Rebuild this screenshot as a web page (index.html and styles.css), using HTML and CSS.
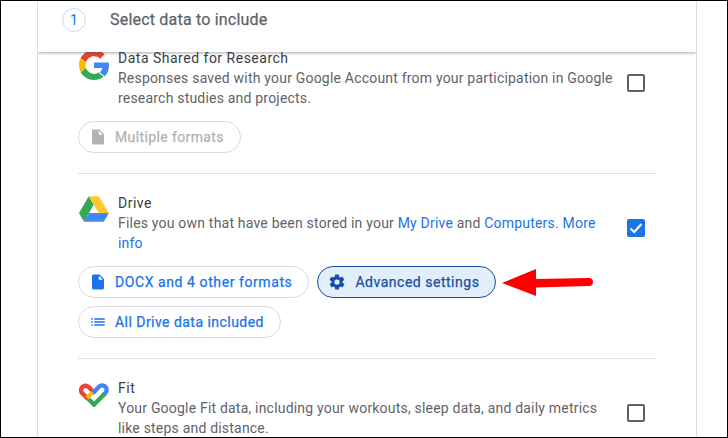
FILE: index.html
```html
<!DOCTYPE html>
<html lang="en">
<head>
<meta charset="utf-8">
<title>Select data to include</title>
<link rel="stylesheet" href="styles.css">
</head>
<body>
<div class="frame">
  <main class="card">
    <header class="step">
      <span class="step-num">1</span>
      <h1 class="step-title">Select data to include</h1>
    </header>
    <div class="list">
      <section class="item">
        <svg class="logo logo-g" viewBox="-1 -1 50 50"><path fill="#ea4335" d="M24 9.500c3.900 0 7.400 1.300 10.200 4l7.600-7.600C37.200 1.600 31.100-1 24-1 14.200-1 5.800 4.600 1.700 12.800l8.900 6.900C12.700 13.500 17.900 9.500 24 9.500z"/><path fill="#4285f4" d="M49 24.500c0-1.700-.2-3.300-.5-4.800H24v9.100h14c-.6 3-2.200 5.500-4.700 7.200l8.600 6.700C46.800 38 49 31.800 49 24.500z"/><path fill="#fbbc05" d="M10.600 28.700c-.5-1.500-.8-3-.8-4.700s.3-3.200.8-4.700l-8.900-6.900C-.1 15.900-1 19.800-1 24s.9 8.100 2.700 11.600z"/><path fill="#34a853" d="M24 49c6.500 0 11.900-2.100 15.900-5.800l-8.600-6.700c-2.100 1.500-4.500 2.300-7.300 2.300-6.100 0-11.300-4-13.400-9.600l-8.900 6.900C5.800 43.400 14.200 49 24 49z"/></svg>
        <div class="body">
          <h2 class="name">Data Shared for Research</h2>
          <p class="desc">Responses saved with your Google Account from your participation in Google research studies and projects.</p>
        </div>
        <span class="check"></span>
        <div class="chips">
          <span class="chip chip-off">
            <svg class="ico" viewBox="0 0 24 24"><path d="M6 2c-1.100 0-2 .9-2 2v16c0 1.100.9 2 2 2h12c1.100 0 2-.9 2-2V8l-6-6zm7 7V3.500L18.500 9z"/></svg>
            Multiple formats
          </span>
        </div>
      </section>
      <section class="item">
        <svg class="logo logo-d" viewBox="0 0 32 27.400"><path fill="#34a853" d="M10.400 0 0 18l5.300 9.400L15.700 9.200z"/><path fill="#ffc82c" d="M10.400 0h10.700L31.800 18H21z"/><path fill="#4285f4" d="M10.600 18h21.200l-5.300 9.400H5.300z"/></svg>
        <div class="body">
          <h2 class="name">Drive</h2>
          <p class="desc">Files you own that have been stored in your <a class="link">My Drive</a> and <a class="link">Computers</a>. <a class="link">More info</a></p>
        </div>
        <span class="check check-on"><svg viewBox="0 0 18 18"><path d="M3.500 9.500 7.200 13l7.300-8" fill="none" stroke="#fff" stroke-width="2"/></svg></span>
        <div class="chips">
          <span class="chip chip-wide">
            <svg class="ico" viewBox="0 0 24 24"><path d="M6 2c-1.100 0-2 .9-2 2v16c0 1.100.9 2 2 2h12c1.100 0 2-.9 2-2V8l-6-6zm7 7V3.500L18.500 9z"/></svg>
            DOCX and 4 other formats
          </span>
          <span class="chip chip-active">
            <svg class="ico" viewBox="0 0 24 24"><path d="M19.400 13c.04-.3.100-.6.100-1s-.03-.7-.1-1l2.100-1.600c.2-.15.25-.4.12-.6l-2-3.500c-.12-.2-.37-.3-.6-.2l-2.500 1c-.5-.4-1.100-.7-1.700-1l-.4-2.600c0-.2-.25-.4-.5-.4h-4c-.25 0-.46.200-.5.400l-.4 2.600c-.6.300-1.200.6-1.700 1l-2.500-1c-.2-.1-.5 0-.6.2l-2 3.500c-.1.200-.07.450.12.600L4.600 11c-.05.300-.1.700-.1 1s.03.700.1 1l-2.100 1.600c-.2.150-.25.400-.12.600l2 3.500c.12.200.37.300.6.200l2.500-1c.5.400 1.100.700 1.700 1l.4 2.600c.04.200.25.400.5.400h4c.25 0 .46-.2.500-.4l.4-2.600c.6-.3 1.200-.6 1.700-1l2.500 1c.2.100.5 0 .6-.2l2-3.500c.12-.2.07-.45-.12-.6zM12 15.500a3.500 3.500 0 1 1 0-7 3.500 3.500 0 0 1 0 7z"/></svg>
            Advanced settings
          </span>
          <span class="chip chip-break">
            <svg class="ico" viewBox="0 0 24 24"><path d="M3 13h2v-2H3zm0 4h2v-2H3zm0-8h2V7H3zm4 4h14v-2H7zm0 4h14v-2H7zM7 7v2h14V7z"/></svg>
            All Drive data included
          </span>
          <svg class="arrow" viewBox="0 0 94 32"><path fill="#f00" d="M0 16 34 2V12L87 11C90 11 91 13 91 15S90 19 87 19L34 20.500V29Z"/></svg>
        </div>
      </section>
      <section class="item">
        <svg class="logo logo-f" viewBox="0 0 30 25" fill="none" stroke-width="4.400"><path d="M9 17 3.600 11.500A4.300 4.300 0 0 1 9.500 4.800L14 9.500" stroke="#ea4335"/><path d="M13.500 11.500 20 4.800A4.300 4.300 0 0 1 26.400 11L24 13.500" stroke="#4285f4"/><path d="M9 16.500 15 22.500 25.500 12" stroke="#34a853"/><path d="M8 16 13.500 10.500" stroke="#fbbc05"/></svg>
        <div class="body">
          <h2 class="name">Fit</h2>
          <p class="desc">Your Google Fit data, including your workouts, sleep data, and daily metrics like steps and distance.</p>
        </div>
        <span class="check"></span>
      </section>
    </div>
  </main>
</div>
</body>
</html>
```

FILE: styles.css
```css
* { box-sizing: border-box; }
html, body { margin: 0; padding: 0; }
body {
  width: 728px;
  height: 438px;
  overflow: hidden;
  background: #fff;
  font-family: Roboto, "Liberation Sans", sans-serif;
  color: #5f6368;
}
.frame {
  height: 438px;
  border: 1px solid #000;
  padding-left: 36px;
  overflow: hidden;
  background: #fff;
}
.card {
  width: 660px;
  height: 100%;
  border-left: 1px solid #dadce0;
  border-right: 1px solid #dadce0;
  position: relative;
  overflow: hidden;
}
.step {
  position: absolute;
  top: 0;
  left: 0;
  right: 0;
  height: 51px;
  z-index: 2;
  background: #fff;
  display: flex;
  align-items: flex-start;
  padding: 7px 0 0 24px;
  box-shadow: 0 1px 3px rgba(60, 64, 67, .45);
}
.step-num {
  width: 24px;
  height: 24px;
  border: 1px solid #c6dafc;
  border-radius: 50%;
  color: #1a73e8;
  font-size: 14px;
  line-height: 22px;
  text-align: center;
}
.step-title {
  margin: 0 0 0 24px;
  font-size: 16px;
  font-weight: 400;
  line-height: 24px;
  letter-spacing: .2px;
  color: #5f6368;
  -webkit-text-stroke: .25px currentColor;
}
.list {
  padding: 47px 40px 0 40px;
}
.item {
  display: grid;
  grid-template-columns: 40px 1fr 40px;
  padding-bottom: 20px;
  margin-bottom: 19px;
  border-bottom: 1px solid #e0e0e0;
}
.logo { display: block; }
.logo-g { width: 30px; height: 30px; margin: 2px 0 0 1px; }
.logo-d { width: 30px; height: 26px; margin: 3px 0 0 1px; }
.logo-f { width: 30px; height: 25px; margin: 4px 0 0 1px; }
.body { min-width: 0; }
.name {
  margin: 0;
  font-size: 14px;
  font-weight: 400;
  line-height: 20px;
  letter-spacing: .5px;
  color: #3c4043;
}
.desc {
  margin: 0;
  font-size: 14px;
  line-height: 20px;
  letter-spacing: .2px;
  color: #5f6368;
}
.link { color: #1a73e8; }
.check {
  width: 18px;
  height: 18px;
  margin: 26px 0 0 11px;
  border: 2px solid #5f6368;
  border-radius: 2px;
  display: block;
}
.check-on {
  background: #1a73e8;
  border: 0;
}
.check-on svg { display: block; width: 18px; height: 18px; }
.chips {
  grid-column: 1 / -1;
  display: flex;
  flex-wrap: wrap;
  gap: 8px;
  margin-top: 13px;
  position: relative;
}
.chip {
  height: 32px;
  display: inline-flex;
  align-items: center;
  gap: 8px;
  padding: 0 16px 0 10px;
  border: 1px solid #dadce0;
  border-radius: 16px;
  font-size: 14px;
  font-weight: 400;
  letter-spacing: .46px;
  color: #1a73e8;
  white-space: nowrap;
  -webkit-text-stroke: .25px currentColor;
}
.chip-wide { letter-spacing: .58px; }
.chip-off { color: #b0b2b5; letter-spacing: .38px; }
.chip-active {
  gap: 9px;
  letter-spacing: .52px;
  background: #e3eefb;
  border-color: #174ea6;
  color: #174ea6;
}
.chip-break { margin-right: 200px; }
.ico { width: 18px; height: 18px; fill: currentColor; flex: none; }
.arrow {
  position: absolute;
  left: 424px;
  top: 1px;
  width: 94px;
  height: 32px;
}
```
